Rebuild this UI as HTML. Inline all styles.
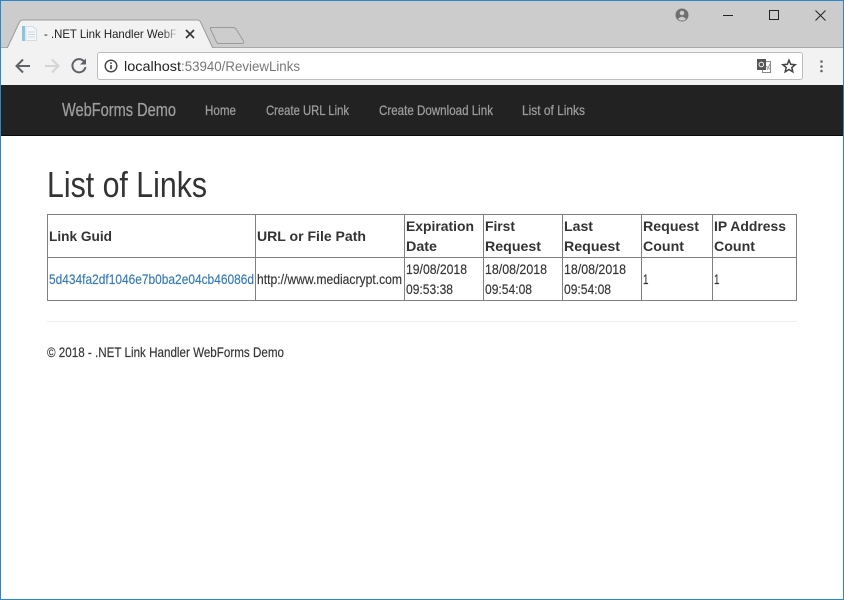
<!DOCTYPE html>
<html lang="en"><head><meta charset="utf-8"><title>- .NET Link Handler WebForms Demo</title>
<style>
html,body{margin:0;padding:0;width:844px;height:600px;overflow:hidden;background:#fff}
svg{display:block}
text{font-family:"Liberation Sans",sans-serif;white-space:pre}
.b{font-weight:700;font-size:14px;fill:#333}
.d{font-size:14px;fill:#333;stroke:#333;stroke-width:.15px}
.n{font-size:14px;fill:#9d9d9d;stroke:#9d9d9d;stroke-width:.25px}
</style></head><body>
<svg width="844" height="600" viewBox="0 0 844 600" xmlns="http://www.w3.org/2000/svg">
<defs><linearGradient id="f" x1="0" x2="1" y1="0" y2="0"><stop offset="0" stop-color="#f2f2f2" stop-opacity="0"/><stop offset="1" stop-color="#f2f2f2"/></linearGradient></defs>
<rect width="844" height="600" fill="#fff"/>
<rect width="844" height="48" fill="#cccccc"/>
<rect y="47" width="844" height="38" fill="#f2f2f2"/>
<rect y="47" width="844" height="1" fill="#a8a8a8"/>
<!-- tabs -->
<path d="M7.500 47.500L19 23Q20.500 20 23 20L197 20Q200 20 201 23L212.500 47.500Z" fill="#f2f2f2" stroke="#9a9a9a"/>
<rect x="8" y="47" width="204" height="2" fill="#f2f2f2"/>
<path d="M211 27.500L233 27.500Q235 27.500 236 29L243.500 41Q244.500 43.500 242 43.500L219 43.500Q217 43.500 216.500 42L210.500 29Q210 27.500 211 27.500Z" fill="#cdcdcd" stroke="#9a9a9a"/>
<!-- favicon -->
<rect x="22" y="26" width="3" height="15" fill="#8cc3de"/>
<path d="M26 26.500L33 26.500L36.500 30L36.500 40.500L26 40.500Z" fill="#f4f7fa" stroke="#d3dce3"/>
<path d="M28 32H35M28 34.500H35M28 37H35" stroke="#c9d8e3"/>
<text x="44" y="38" font-size="12" fill="#222" textLength="133" lengthAdjust="spacingAndGlyphs">- .NET Link Handler WebF</text>
<rect x="162" y="24" width="17" height="18" fill="url(#f)"/>
<path d="M186 30L194 38M194 30L186 38" stroke="#333" stroke-width="1.600"/>
<!-- window controls -->
<circle cx="682" cy="15" r="6.500" fill="#6f6f6f"/>
<circle cx="682" cy="13" r="2.300" fill="#ccc"/>
<path d="M678 19Q682 14.500 686 19L684 20.500H680Z" fill="#ccc"/>
<rect x="723" y="15" width="10" height="1" fill="#222"/>
<rect x="769.500" y="10.500" width="9" height="9" fill="none" stroke="#222"/>
<path d="M815.500 10.500L825.500 20.500M825.500 10.500L815.500 20.500" stroke="#222"/>
<!-- toolbar icons -->
<path d="M30 66H17M23 59.500L16.500 66L23 72.500" fill="none" stroke="#5f6368" stroke-width="2"/>
<path d="M45 66H58M52 59.500L58.500 66L52 72.500" fill="none" stroke="#d3d4d5" stroke-width="2"/>
<path d="M84.500 62A6.600 6.600 0 1 0 85.500 67" fill="none" stroke="#5f6368" stroke-width="2"/>
<path d="M86 58.500V64.500H80Z" fill="#5f6368"/>
<rect x="97.500" y="52.500" width="705" height="27" rx="2.500" fill="#fff" stroke="#bdbdbd"/>
<circle cx="111" cy="66" r="5.800" fill="none" stroke="#444" stroke-width="1.400"/>
<rect x="110.200" y="65" width="1.600" height="4.200" fill="#444"/>
<rect x="110.200" y="62.300" width="1.600" height="1.600" fill="#444"/>
<text x="124" y="71" font-size="14" fill="#222" textLength="57" lengthAdjust="spacingAndGlyphs">localhost</text>
<text x="181" y="71" font-size="14" fill="#777" textLength="119" lengthAdjust="spacingAndGlyphs">:53940/ReviewLinks</text>
<!-- translate icon -->
<rect x="762.500" y="61.500" width="8" height="11" fill="#fff" stroke="#888"/>
<rect x="757" y="59" width="9" height="11" fill="#555"/>
<circle cx="761.300" cy="64.500" r="2.300" fill="none" stroke="#eee"/>
<path d="M766 66L771 70M770 64L767 70" stroke="#999"/>
<path d="M789 60.200L790.700 64.300L795.200 64.700L791.800 67.500L792.800 71.800L789 69.500L785.200 71.800L786.200 67.500L782.800 64.700L787.300 64.300Z" fill="none" stroke="#444" stroke-width="1.500"/>
<circle cx="821.500" cy="61.500" r="1.300" fill="#666"/><circle cx="821.500" cy="66.500" r="1.300" fill="#666"/><circle cx="821.500" cy="71" r="1.300" fill="#666"/>
<!-- navbar -->
<rect y="85" width="844" height="50" fill="#222"/>
<rect y="135" width="844" height="1" fill="#0a0a0a"/>
<text x="62" y="116" font-size="18" fill="#9d9d9d" stroke="#9d9d9d" stroke-width=".3" textLength="114" lengthAdjust="spacingAndGlyphs">WebForms Demo</text>
<text class="n" x="205" y="115" textLength="31" lengthAdjust="spacingAndGlyphs">Home</text>
<text class="n" x="266" y="115" textLength="83" lengthAdjust="spacingAndGlyphs">Create URL Link</text>
<text class="n" x="379" y="115" textLength="114" lengthAdjust="spacingAndGlyphs">Create Download Link</text>
<text class="n" x="522" y="115" textLength="63" lengthAdjust="spacingAndGlyphs">List of Links</text>
<!-- heading -->
<text x="47" y="197" font-size="36" fill="#333" textLength="160" lengthAdjust="spacingAndGlyphs">List of Links</text>
<!-- table -->
<path d="M47.500 214.500H796.500V300.500H47.500ZM47.500 257.500H796.500M255.500 214.500V300.500M404.500 214.500V300.500M483.500 214.500V300.500M562.500 214.500V300.500M641.500 214.500V300.500M712.500 214.500V300.500" fill="none" stroke="#808080"/>
<text class="b" x="49" y="241" textLength="63" lengthAdjust="spacingAndGlyphs">Link Guid</text>
<text class="b" x="257" y="241" textLength="109" lengthAdjust="spacingAndGlyphs">URL or File Path</text>
<text class="b" x="406" y="231" textLength="68" lengthAdjust="spacingAndGlyphs">Expiration</text>
<text class="b" x="406" y="251" textLength="31" lengthAdjust="spacingAndGlyphs">Date</text>
<text class="b" x="485" y="231" textLength="30" lengthAdjust="spacingAndGlyphs">First</text>
<text class="b" x="485" y="251" textLength="56" lengthAdjust="spacingAndGlyphs">Request</text>
<text class="b" x="564" y="231" textLength="29" lengthAdjust="spacingAndGlyphs">Last</text>
<text class="b" x="564" y="251" textLength="56" lengthAdjust="spacingAndGlyphs">Request</text>
<text class="b" x="643" y="231" textLength="56" lengthAdjust="spacingAndGlyphs">Request</text>
<text class="b" x="643" y="251" textLength="41" lengthAdjust="spacingAndGlyphs">Count</text>
<text class="b" x="714" y="231" textLength="72" lengthAdjust="spacingAndGlyphs">IP Address</text>
<text class="b" x="714" y="251" textLength="41" lengthAdjust="spacingAndGlyphs">Count</text>
<text x="49" y="284" font-size="14" fill="#337ab7" stroke="#337ab7" stroke-width=".15" textLength="205" lengthAdjust="spacingAndGlyphs">5d434fa2df1046e7b0ba2e04cb46086d</text>
<text class="d" x="257" y="284" textLength="145" lengthAdjust="spacingAndGlyphs">http://www.mediacrypt.com</text>
<text class="d" x="406" y="274" textLength="61" lengthAdjust="spacingAndGlyphs">19/08/2018</text>
<text class="d" x="406" y="294" textLength="47" lengthAdjust="spacingAndGlyphs">09:53:38</text>
<text class="d" x="485" y="274" textLength="62" lengthAdjust="spacingAndGlyphs">18/08/2018</text>
<text class="d" x="485" y="294" textLength="47" lengthAdjust="spacingAndGlyphs">09:54:08</text>
<text class="d" x="564" y="274" textLength="62" lengthAdjust="spacingAndGlyphs">18/08/2018</text>
<text class="d" x="564" y="294" textLength="47" lengthAdjust="spacingAndGlyphs">09:54:08</text>
<text class="d" x="643" y="284" textLength="5.500" lengthAdjust="spacingAndGlyphs">1</text>
<text class="d" x="714" y="284" textLength="5.500" lengthAdjust="spacingAndGlyphs">1</text>
<!-- footer -->
<rect x="47" y="321" width="750" height="1" fill="#eeeeee"/>
<text class="d" x="47" y="357" textLength="237" lengthAdjust="spacingAndGlyphs">© 2018 - .NET Link Handler WebForms Demo</text>
<!-- window border -->
<rect x="0.500" y="0.500" width="843" height="599" fill="none" stroke="#2b88c8"/>
</svg>
</body></html>
